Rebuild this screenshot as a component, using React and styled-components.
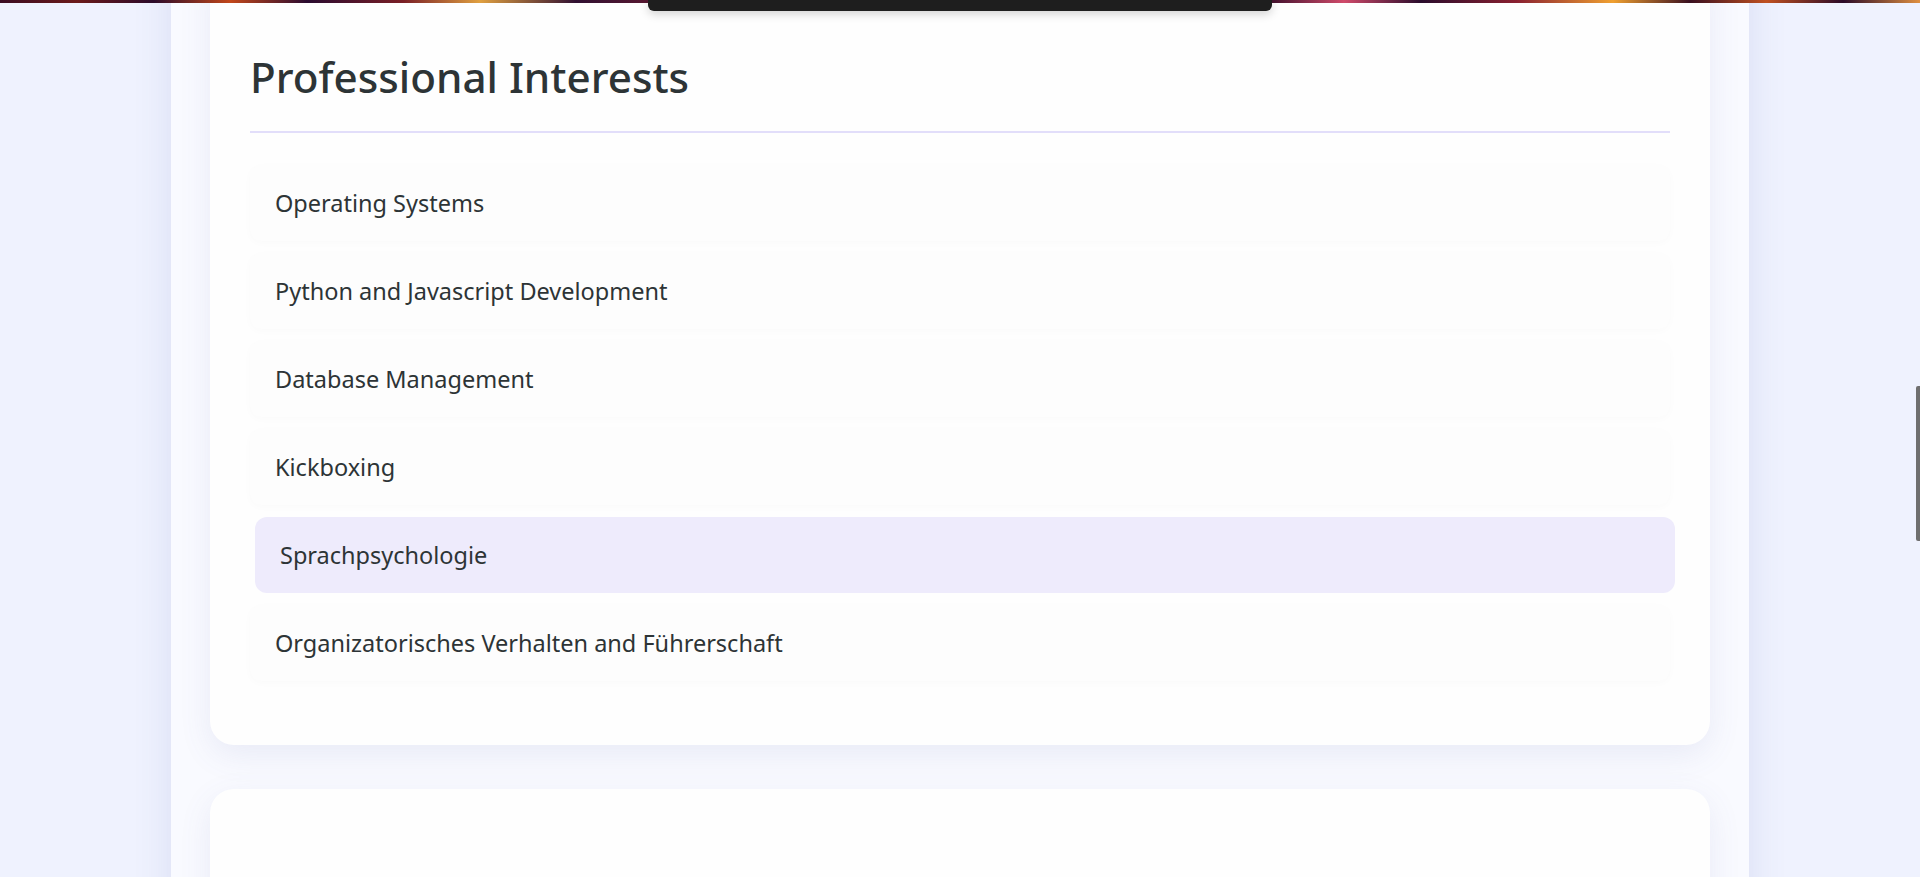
import React from "react";
import styled, { createGlobalStyle } from "styled-components";

const Global = createGlobalStyle`
  html, body {
    margin: 0;
    padding: 0;
    overflow: hidden;
    background: #eff2fe;
    font-family: "Noto Sans", "Open Sans", sans-serif;
    color: #2d3436;
  }
  * { box-sizing: border-box; }
`;

const TopStrip = styled.div`
  position: fixed;
  top: 0;
  left: 0;
  right: 0;
  height: 3px;
  z-index: 20;
  background: linear-gradient(
    90deg,
    #3a0c22 0%, #6b1a1a 4%, #2b0a2a 8%, #c2471a 12%, #2a0b30 16%,
    #7a1f26 21%, #e0a040 25%, #301032 30%, #5a1830 34%, #b83020 38%,
    #1e0a26 44%, #4a1430 52%, #9a2a30 58%, #e83a5a 62%, #3a0e2a 66%,
    #d04a6a 70%, #2a0c2c 74%, #8a2030 79%, #f0a030 84%, #3a1020 88%,
    #c05020 92%, #2a0a28 96%, #e09040 100%
  );
`;

const NavTab = styled.div`
  position: fixed;
  top: 0;
  left: 648px;
  width: 624px;
  height: 11px;
  z-index: 30;
  background: #1e1e1e;
  border-radius: 0 0 6px 6px;
  box-shadow: 0 3px 10px rgba(0, 0, 0, 0.18);
`;

const ScrollThumb = styled.div`
  position: fixed;
  top: 386px;
  right: 0;
  width: 4px;
  height: 155px;
  z-index: 30;
  background: #6f6f6f;
  border-radius: 2px 0 0 2px;
`;

const Main = styled.main`
  width: 1578px;
  margin: -40px auto 0;
  min-height: 1200px;
  padding: 0 39px;
  background: #f9faff;
  box-shadow: 0 0 36px rgba(70, 85, 170, 0.13);
  display: flex;
  flex-direction: column;
  gap: 44px;
`;

const Card = styled.section`
  background: #fefefe;
  border-radius: 24px;
  padding: 40px 40px 64px;
  box-shadow: 0 10px 32px rgba(90, 100, 170, 0.1);
  min-height: ${(p) => (p.$empty ? "400px" : "auto")};
`;

const Heading = styled.h2`
  margin: 52px 0 32px;
  padding-bottom: 28px;
  border-bottom: 2px solid #e2defa;
  font-size: 42.2px;
  line-height: 1.2;
  font-weight: 500;
  color: #2d3436;
`;

const List = styled.ul`
  list-style: none;
  margin: 0;
  padding: 0;
  display: flex;
  flex-direction: column;
  gap: 12px;
`;

const Item = styled.li`
  height: 76px;
  display: flex;
  align-items: center;
  padding: 0 25px;
  border-radius: 12px;
  font-size: 23.5px;
  color: #2d3436;
  background: ${(p) => (p.$active ? "#eeebfc" : "#fdfdfd")};
  box-shadow: ${(p) =>
    p.$active ? "none" : "0 2px 8px rgba(0, 0, 0, 0.02)"};
  transform: ${(p) => (p.$active ? "translateX(5px)" : "none")};
`;

const interests = [
  "Operating Systems",
  "Python and Javascript Development",
  "Database Management",
  "Kickboxing",
  "Sprachpsychologie",
  "Organizatorisches Verhalten and Führerschaft",
];

export default function App() {
  return (
    <>
      <Global />
      <TopStrip />
      <NavTab />
      <ScrollThumb />
      <Main>
        <Card>
          <Heading>Professional Interests</Heading>
          <List>
            {interests.map((t) => (
              <Item key={t} $active={t === "Sprachpsychologie"}>
                {t}
              </Item>
            ))}
          </List>
        </Card>
        <Card $empty />
      </Main>
    </>
  );
}
